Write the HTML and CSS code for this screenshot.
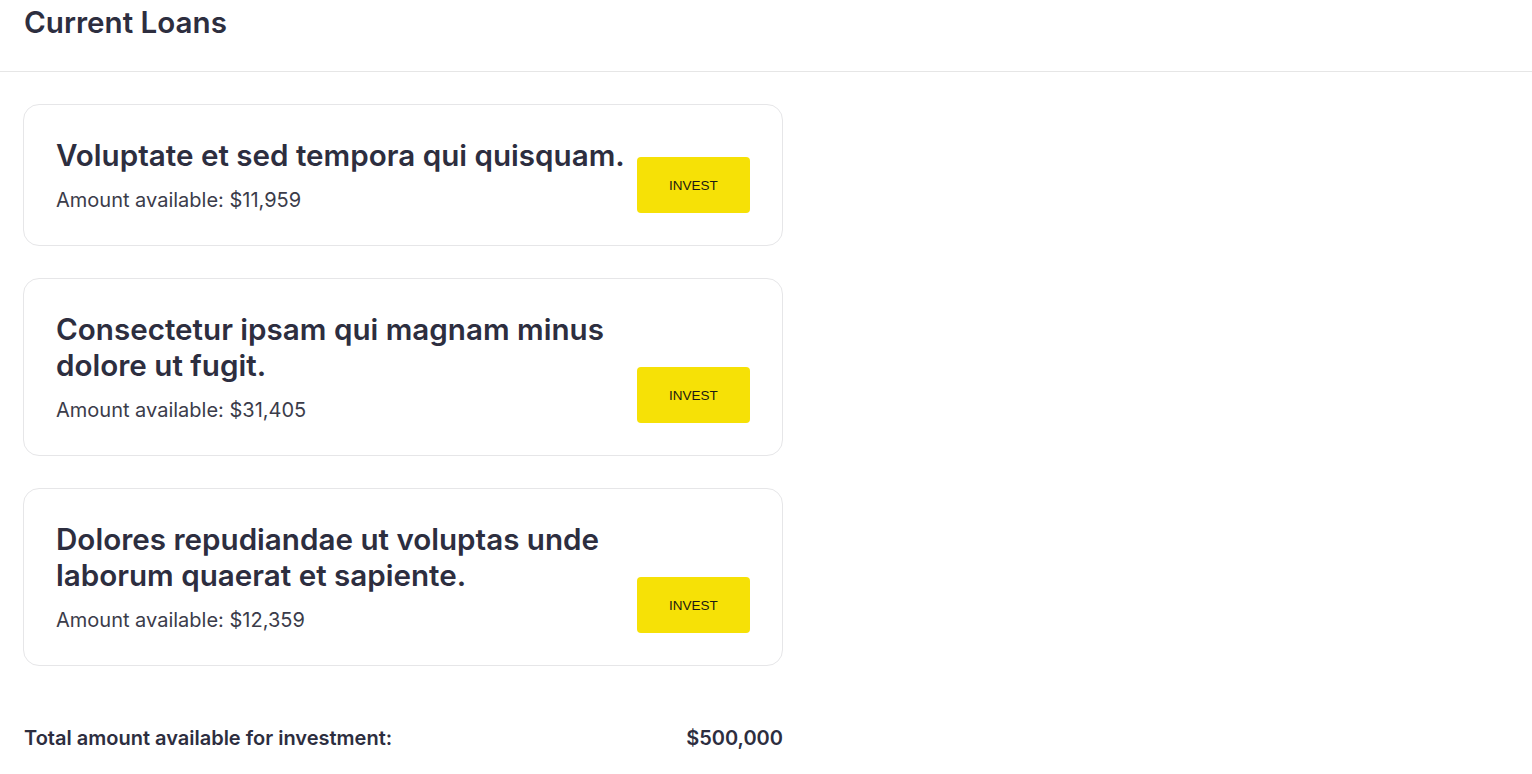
FILE: index.html
```html
<!DOCTYPE html>
<html lang="en">
<head>
<meta charset="utf-8">
<title>Current Loans</title>
<link rel="stylesheet" href="styles.css">
</head>
<body>
<header class="page-header">
  <h1 class="page-title">Current Loans</h1>
</header>
<main class="content">
  <section class="loan-list">
    <article class="loan-card">
      <div class="loan-info">
        <h2 class="loan-title">Voluptate et sed tempora qui quisquam.</h2>
        <p class="loan-amount">Amount available: $11,959</p>
      </div>
      <button class="invest-btn">INVEST</button>
    </article>
    <article class="loan-card">
      <div class="loan-info">
        <h2 class="loan-title">Consectetur ipsam qui magnam minus dolore ut fugit.</h2>
        <p class="loan-amount">Amount available: $31,405</p>
      </div>
      <button class="invest-btn">INVEST</button>
    </article>
    <article class="loan-card">
      <div class="loan-info">
        <h2 class="loan-title">Dolores repudiandae ut voluptas unde laborum quaerat et sapiente.</h2>
        <p class="loan-amount">Amount available: $12,359</p>
      </div>
      <button class="invest-btn">INVEST</button>
    </article>
  </section>
  <div class="total-row">
    <span class="total-label">Total amount available for investment:</span>
    <span class="total-value">$500,000</span>
  </div>
</main>
</body>
</html>
```

FILE: styles.css
```css
* { box-sizing: border-box; }

body {
  margin: 0;
  font-family: Inter, "Noto Sans", sans-serif;
  color: #2d2e3f;
  background: #ffffff;
}

.page-header {
  height: 72px;
  padding: 0 24px;
  border-bottom: 1px solid #e6e6e6;
}

.page-title {
  margin: 0;
  font-size: 29.6px;
  line-height: 44px;
  font-weight: 600;
  color: #2d2e3f;
}

.content {
  width: 760px;
  margin-left: 23px;
  padding-top: 32px;
}

.loan-list {
  display: flex;
  flex-direction: column;
  gap: 32px;
}

.loan-card {
  display: flex;
  align-items: flex-end;
  gap: 12px;
  padding: 32px;
  border: 1px solid #e6e6e8;
  border-radius: 16px;
}

.loan-info {
  flex: 1;
  min-width: 0;
}

.loan-title {
  margin: 0;
  font-size: 29.6px;
  line-height: 36px;
  font-weight: 600;
  color: #2d2e3f;
}

.loan-amount {
  margin: 14px 0 0;
  font-size: 20px;
  line-height: 26px;
  color: #3b3c4a;
}

.invest-btn {
  flex: none;
  width: 113px;
  height: 56px;
  border: none;
  border-radius: 4px;
  background: #f6e106;
  font-family: "Liberation Sans", Arial, sans-serif;
  font-size: 13.5px;
  color: #1c1a10;
}

.total-row {
  display: flex;
  justify-content: space-between;
  align-items: center;
  margin-top: 60px;
  padding-left: 1px;
  font-size: 20px;
  line-height: 24px;
  font-weight: 600;
  color: #2d2e3f;
}
```
